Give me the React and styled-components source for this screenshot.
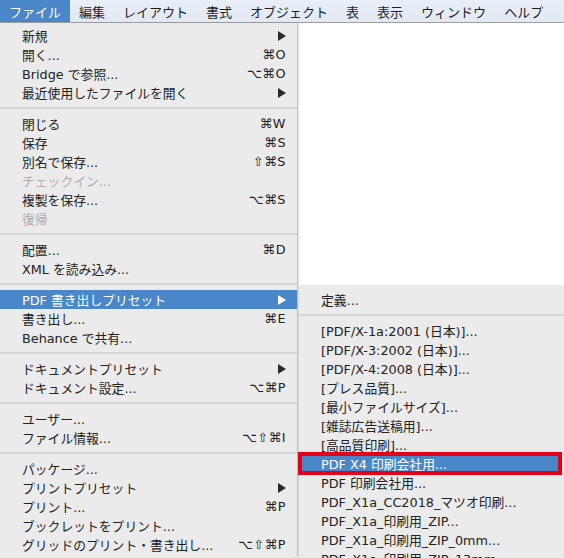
import React from "react";
import styled, { createGlobalStyle } from "styled-components";

const GlobalStyle = createGlobalStyle`
  html, body {
    margin: 0;
    padding: 0;
    background: #ffffff;
    overflow: hidden;
  }
  body {
    width: 564px;
    height: 558px;
    font-family: "Liberation Sans", "Noto Sans CJK JP", "DejaVu Sans", sans-serif;
    -webkit-font-smoothing: antialiased;
  }
`;

const Page = styled.div`
  width: 564px;
  height: 558px;
  overflow: hidden;
  display: flex;
  flex-direction: column;
`;

const MenuBar = styled.nav`
  display: flex;
  height: 22px;
  flex-shrink: 0;
  background: linear-gradient(#e9eff8, #e2e9f3);
  border-bottom: 1px solid #9d9fa3;
`;

const BarItem = styled.div`
  display: flex;
  align-items: center;
  padding: 0 9px;
  font-size: 13px;
  color: ${(p) => (p.$active ? "#ffffff" : "#1e1e1e")};
  background: ${(p) => (p.$active ? "#4a87c9" : "transparent")};
  white-space: nowrap;
`;

const Body = styled.div`
  flex: 1;
  display: flex;
  align-items: flex-start;
  min-height: 0;
`;

const Menu = styled.div`
  width: 297px;
  flex-shrink: 0;
  padding: 3px 0 4px;
  background: #ebebeb;
  border-right: 1px solid #c4c4c4;
  border-bottom-right-radius: 5px;
  box-shadow: 1px 0 2px rgba(0, 0, 0, 0.12);
`;

const SubMenu = styled.div`
  flex: 1;
  margin-top: 263px;
  padding: 4px 0;
  background: #ebebeb;
  border-top-left-radius: 5px;
  border-left: 1px solid #dadada;
  box-shadow: 0 -1px 2px rgba(0, 0, 0, 0.1);
`;

const Row = styled.div`
  position: relative;
  display: flex;
  align-items: center;
  height: 19px;
  padding: 0 11px 0 22px;
  margin-right: ${(p) => (p.$marked ? "2px" : "0")};
  font-family: "DejaVu Sans", "Noto Sans CJK JP", sans-serif;
  font-size: 12.8px;
  white-space: nowrap;
  color: ${(p) =>
    p.$active ? "#ffffff" : p.$disabled ? "#acacac" : "#222222"};
  background: ${(p) => (p.$active ? "#4a87c9" : "transparent")};

  &::after {
    content: "";
    display: ${(p) => (p.$marked ? "block" : "none")};
    position: absolute;
    left: -1px;
    right: 0;
    top: -2px;
    bottom: -2px;
    border: 4px solid #e50019;
    pointer-events: none;
  }
`;

const Label = styled.span`
  flex: 1;
`;

const Shortcut = styled.span`
  font-family: "DejaVu Sans", sans-serif;
  font-size: 12.8px;
  letter-spacing: 0.5px;
`;

const Separator = styled.div`
  height: 12px;
  display: flex;
  align-items: center;

  &::before {
    content: "";
    flex: 1;
    height: 2px;
    background: #d6d6d6;
  }
`;

const Arrow = ({ color }) => (
  <svg width="8" height="10" viewBox="0 0 8 10">
    <polygon points="0,0 8,5 0,10" fill={color} />
  </svg>
);

const BAR = ["ファイル", "編集", "レイアウト", "書式", "オブジェクト", "表", "表示", "ウィンドウ", "ヘルプ"];

const FILE_MENU = [
  { label: "新規", sub: true },
  { label: "開く...", key: "⌘O" },
  { label: "Bridge で参照...", key: "⌥⌘O" },
  { label: "最近使用したファイルを開く", sub: true },
  "-",
  { label: "閉じる", key: "⌘W" },
  { label: "保存", key: "⌘S" },
  { label: "別名で保存...", key: "⇧⌘S" },
  { label: "チェックイン...", disabled: true },
  { label: "複製を保存...", key: "⌥⌘S" },
  { label: "復帰", disabled: true },
  "-",
  { label: "配置...", key: "⌘D" },
  { label: "XML を読み込み..." },
  "-",
  { label: "PDF 書き出しプリセット", sub: true, active: true },
  { label: "書き出し...", key: "⌘E" },
  { label: "Behance で共有..." },
  "-",
  { label: "ドキュメントプリセット", sub: true },
  { label: "ドキュメント設定...", key: "⌥⌘P" },
  "-",
  { label: "ユーザー..." },
  { label: "ファイル情報...", key: "⌥⇧⌘I" },
  "-",
  { label: "パッケージ..." },
  { label: "プリントプリセット", sub: true },
  { label: "プリント...", key: "⌘P" },
  { label: "ブックレットをプリント..." },
  { label: "グリッドのプリント・書き出し...", key: "⌥⇧⌘P" },
];

const PRESETS = [
  { label: "定義..." },
  "-",
  { label: "[PDF/X-1a:2001 (日本)]..." },
  { label: "[PDF/X-3:2002 (日本)]..." },
  { label: "[PDF/X-4:2008 (日本)]..." },
  { label: "[プレス品質]..." },
  { label: "[最小ファイルサイズ]..." },
  { label: "[雑誌広告送稿用]..." },
  { label: "[高品質印刷]..." },
  { label: "PDF X4 印刷会社用...", active: true, marked: true },
  { label: "PDF 印刷会社用..." },
  { label: "PDF_X1a_CC2018_マツオ印刷..." },
  { label: "PDF_X1a_印刷用_ZIP..." },
  { label: "PDF_X1a_印刷用_ZIP_0mm..." },
  { label: "PDF_X1a_印刷用_ZIP_13mm..." },
];

const MenuItems = ({ items }) =>
  items.map((item, i) =>
    item === "-" ? (
      <Separator key={i} />
    ) : (
      <Row
        key={i}
        $active={item.active}
        $disabled={item.disabled}
        $marked={item.marked}
      >
        <Label>{item.label}</Label>
        {item.key && <Shortcut>{item.key}</Shortcut>}
        {item.sub && <Arrow color={item.active ? "#ffffff" : "#2a2a2a"} />}
      </Row>
    )
  );

const App = () => {
  return (
    <Page>
      <GlobalStyle />
      <MenuBar>
        {BAR.map((name, i) => (
          <BarItem key={name} $active={i === 0}>
            {name}
          </BarItem>
        ))}
      </MenuBar>
      <Body>
        <Menu>
          <MenuItems items={FILE_MENU} />
        </Menu>
        <SubMenu>
          <MenuItems items={PRESETS} />
        </SubMenu>
      </Body>
    </Page>
  );
};

export default App;
